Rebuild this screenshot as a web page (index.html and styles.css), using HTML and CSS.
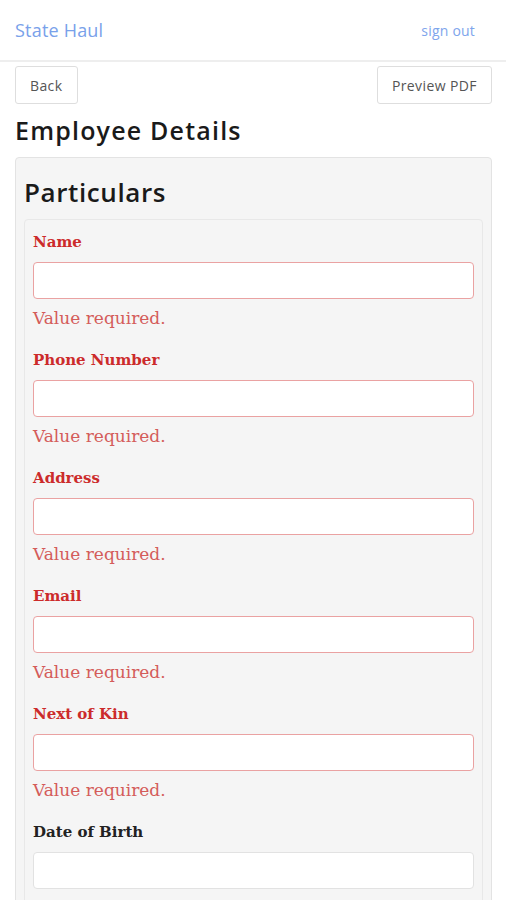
FILE: index.html
```html
<!DOCTYPE html>
<html>
<head>
<meta charset="utf-8">
<link rel="stylesheet" href="styles.css">
</head>
<body>
<header class="topbar">
  <a class="brand">State Haul</a>
  <a class="signout">sign out</a>
</header>
<div class="page">
  <div class="toolbar">
    <button class="btn">Back</button>
    <button class="btn">Preview PDF</button>
  </div>
  <h1 class="title">Employee Details</h1>
  <div class="panel">
    <h2 class="subtitle">Particulars</h2>
    <div class="inner">
      <div class="field invalid">
        <label class="label">Name</label>
        <div class="input"></div>
        <div class="error">Value required.</div>
      </div>
      <div class="field invalid">
        <label class="label">Phone Number</label>
        <div class="input"></div>
        <div class="error">Value required.</div>
      </div>
      <div class="field invalid">
        <label class="label">Address</label>
        <div class="input"></div>
        <div class="error">Value required.</div>
      </div>
      <div class="field invalid">
        <label class="label">Email</label>
        <div class="input"></div>
        <div class="error">Value required.</div>
      </div>
      <div class="field invalid">
        <label class="label">Next of Kin</label>
        <div class="input"></div>
        <div class="error">Value required.</div>
      </div>
      <div class="field">
        <label class="label">Date of Birth</label>
        <div class="input"></div>
      </div>
    </div>
  </div>
</div>
</body>
</html>
```
FILE: styles.css
```css
html, body {
  margin: 0;
  padding: 0;
  background: #fff;
  font-family: "Open Sans", "Lato", sans-serif;
  color: #222;
}
.topbar {
  height: 60px;
  border-bottom: 2px solid #eeeeee;
  display: flex;
  align-items: center;
  justify-content: space-between;
  padding: 0 31px 0 15px;
}
.brand {
  color: #79a1ea;
  font-size: 18px;
  letter-spacing: 0.2px;
}
.signout {
  color: #7ea5ec;
  font-size: 14px;
  letter-spacing: 0.2px;
}
.page {
  padding: 4px 14px 0 15px;
}
.toolbar {
  display: flex;
  justify-content: space-between;
}
.btn {
  height: 38px;
  padding: 0 14px;
  border: 1px solid #dedede;
  border-radius: 3px;
  background: #fff;
  font-family: inherit;
  font-size: 14px;
  letter-spacing: 0.4px;
  color: #555;
}
.title {
  font-size: 25px;
  font-weight: 600;
  line-height: 32px;
  margin: 10px 0 11px;
  letter-spacing: 1.2px;
  color: #1a1a1a;
}
.panel {
  background: #f5f5f5;
  border: 1px solid #e3e3e3;
  border-radius: 4px;
  padding: 8px;
  height: 760px;
}
.subtitle {
  font-size: 26px;
  font-weight: 600;
  line-height: 32px;
  margin: 10px 0 11px;
  letter-spacing: 0.6px;
  color: #1a1a1a;
}
.inner {
  border: 1px solid #e8e8e8;
  border-radius: 4px;
  padding: 12px 8px 0;
  height: 700px;
}
.field {
  margin-bottom: 20px;
}
.label {
  display: block;
  font-family: "DejaVu Serif", serif;
  font-weight: bold;
  font-size: 15px;
  line-height: 20px;
  margin-bottom: 10px;
  color: #222;
}
.input {
  height: 35px;
  background: #fff;
  border: 1px solid #e2e2e2;
  border-radius: 4px;
}
.error {
  font-family: "DejaVu Serif", serif;
  font-size: 17px;
  line-height: 24px;
  margin-top: 7px;
  color: #d45c5a;
}
.invalid .label {
  color: #cc2b2b;
}
.invalid .input {
  border-color: #eaa2a2;
}
```
